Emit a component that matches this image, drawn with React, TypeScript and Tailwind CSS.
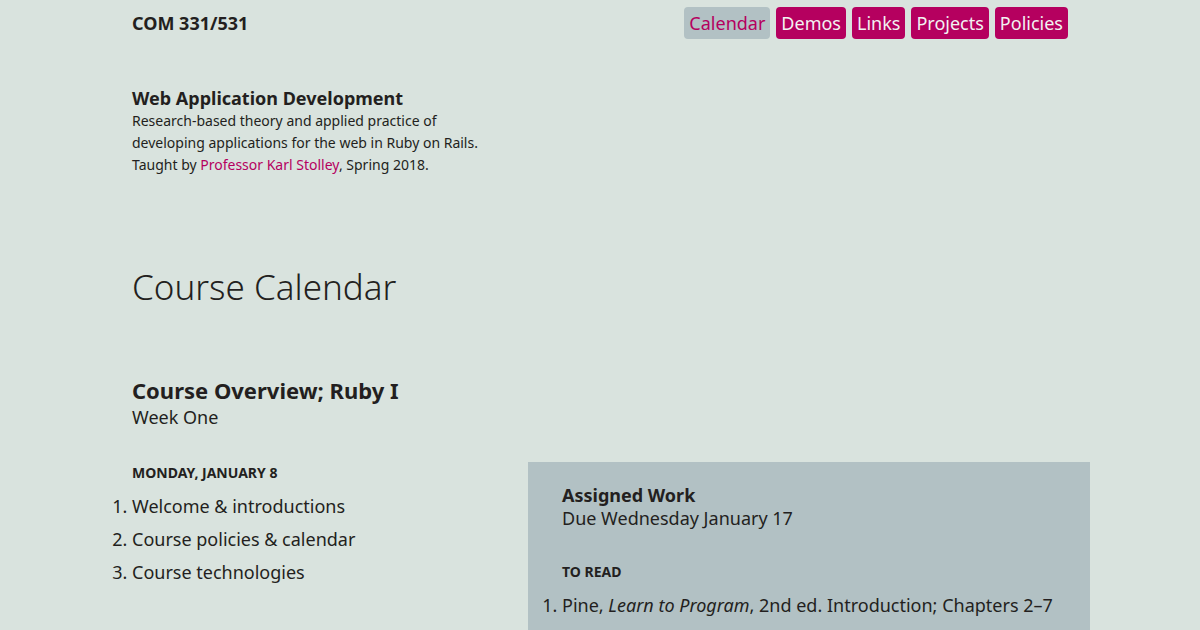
const navItems = ["Calendar", "Demos", "Links", "Projects", "Policies"];

const NavLink: React.FC<{ label: string; active?: boolean }> = ({ label, active }) => {
  return (
    <a
      href="#"
      className={`rounded-[4px] px-[5px] text-[18px] leading-[32px] ${
        active ? "bg-[#b2c1c4] text-[#b5005f]" : "bg-[#b5005f] text-[#f2f2f2]"
      }`}
    >
      {label}
    </a>
  );
};

const App: React.FC = () => {
  return (
    <div
      className="h-[630px] w-[1200px] overflow-hidden bg-[#d9e3de] text-[#231f20]"
      style={{ fontFamily: '"Noto Sans", "Open Sans", sans-serif' }}
    >
      <header className="ml-[132px] mr-[132px] flex items-start justify-between pt-[7px]">
        <span className="mt-[3px] text-[18px] font-bold">COM 331/531</span>
        <nav className="flex gap-[6px]">
          {navItems.map((item) => (
            <NavLink key={item} label={item} active={item === "Calendar"} />
          ))}
        </nav>
      </header>

      <section className="ml-[132px] mt-[48px]">
        <h2 className="text-[18px] font-bold leading-[22px]">Web Application Development</h2>
        <p className="mt-[1px] w-[360px] text-[14px] leading-[22px]">
          Research-based theory and applied practice of developing applications for the web in Ruby on Rails.
          Taught by <a href="#" className="text-[#b5005f]">Professor Karl Stolley</a>, Spring 2018.
        </p>
      </section>

      <h1 className="ml-[132px] mt-[89px] text-[35px] font-light leading-[44px]">Course Calendar</h1>

      <section className="mt-[67px]">
        <h2 className="ml-[132px] text-[22px] font-bold leading-[28px]">Course Overview; Ruby I</h2>
        <p className="ml-[132px] text-[18px] leading-[26px]">Week One</p>

        <div className="mt-[32px] flex">
          <div className="w-[528px] pl-[132px] pt-[1px]">
            <h3 className="text-[14px] font-bold uppercase leading-[20px]">Monday, January 8</h3>
            <ol className="mt-[7px] list-decimal text-[18px] leading-[33px]">
              <li>Welcome &amp; introductions</li>
              <li>Course policies &amp; calendar</li>
              <li>Course technologies</li>
            </ol>
          </div>
          <aside className="h-[200px] w-[562px] bg-[#b2c1c4] pl-[34px] pt-[21px]">
            <h3 className="text-[18px] font-bold leading-[24px]">Assigned Work</h3>
            <p className="text-[18px] leading-[22px]">Due Wednesday January 17</p>
            <h4 className="mt-[33px] text-[14px] font-bold uppercase leading-[20px]">To Read</h4>
            <ol className="mt-[7px] list-decimal text-[18px] leading-[33px]">
              <li>
                Pine, <em>Learn to Program</em>, 2nd ed. Introduction; Chapters 2–7
              </li>
            </ol>
          </aside>
        </div>
      </section>
    </div>
  );
};

export default App;
